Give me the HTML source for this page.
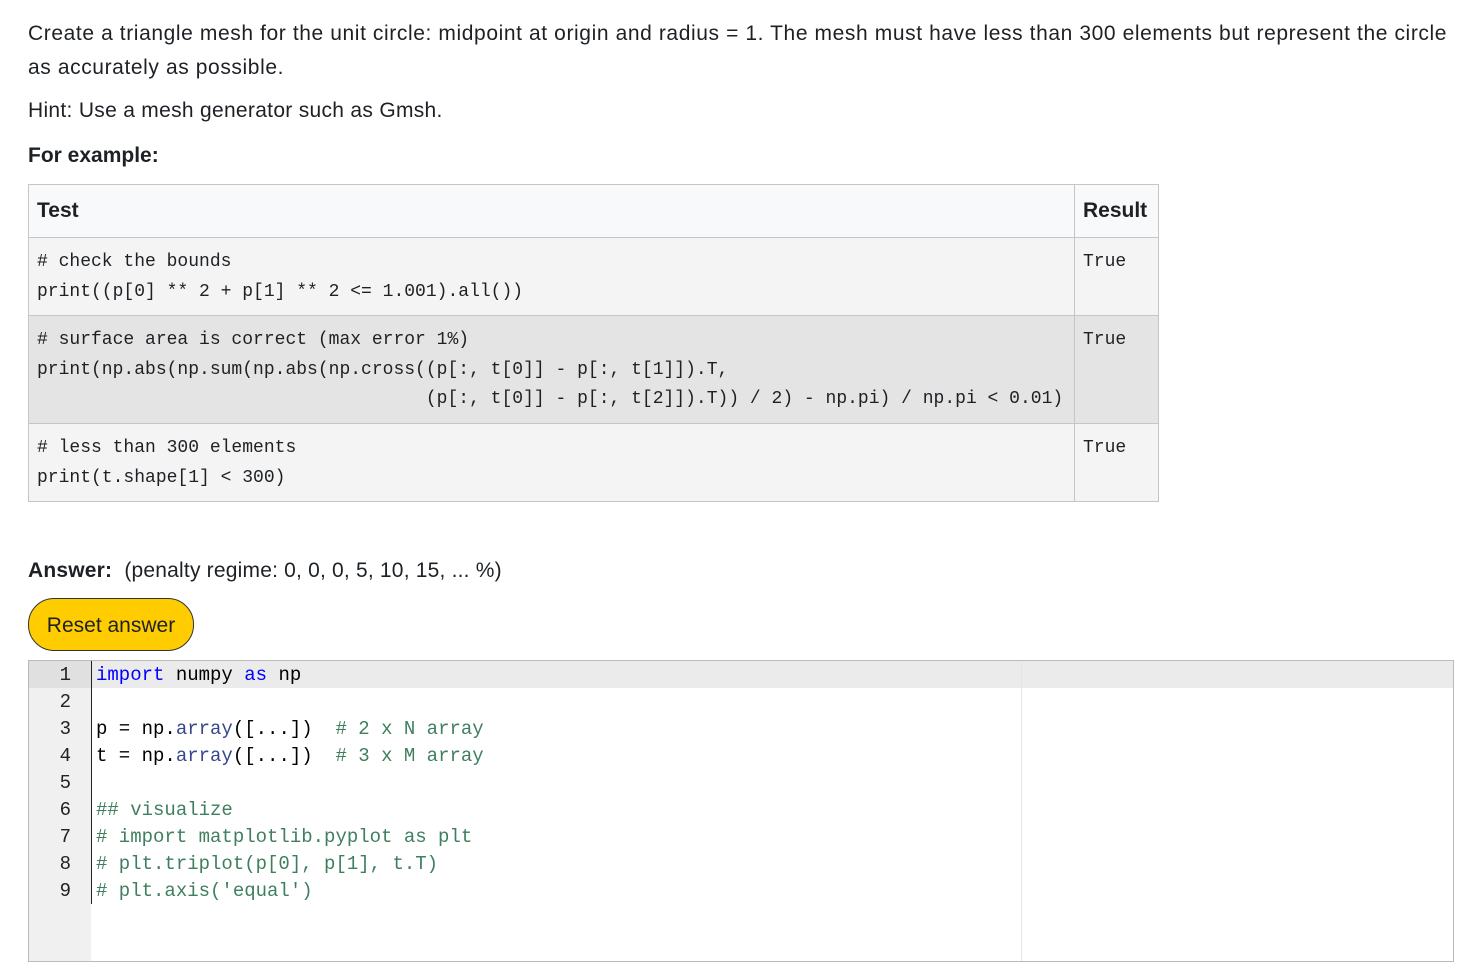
<!DOCTYPE html>
<html><head><meta charset="utf-8"><style>
body{margin:0;background:#fff;font-family:"Liberation Sans",sans-serif;color:#1d2125;width:1480px;height:952px;overflow:hidden;position:relative}
p.t{position:absolute;left:28px;margin:0;font-size:21px;white-space:nowrap}
table{position:absolute;left:28px;top:184px;border-collapse:collapse;width:1131px}
td,th{border:1px solid #c6c6c6;vertical-align:top;text-align:left;padding:0 8px}
th{height:52px;font-size:21px;font-weight:bold;background:#f8f9fa;vertical-align:middle}
td{font-family:"Liberation Mono",monospace;font-size:18px;line-height:29.5px;white-space:pre;padding-top:10px;padding-bottom:8px;color:#1d2125}
tr.r1 td,tr.r3 td{background:#f4f4f4}
tr.r2 td{background:#e4e4e4}
.btn{position:absolute;left:28px;top:598px;width:164px;height:51px;border:1px solid #333;border-radius:26px;background:#ffcc00;font-size:21px;line-height:53px;text-align:center;color:#1d2125}
.ed{position:absolute;left:28px;top:660px;width:1424px;height:300px;border:1px solid #bbb;background:#fff}
.gut{position:absolute;left:0;top:0;width:62px;height:300px;background:#f0f0f0}
.hl{position:absolute;left:0;top:0;width:1424px;height:27px;background:#ebebeb}
.ln{position:absolute;left:0;width:42px;text-align:right;font-family:"Liberation Mono",monospace;font-size:19px;color:#222}
.cd{position:absolute;left:67px;font-family:"Liberation Mono",monospace;font-size:19px;white-space:pre;color:#000}
.k{color:#0000ff}.c{color:#3f7f5f}.f{color:#36468c}
</style></head><body>
<p class="t" style="top:17px;line-height:34px;letter-spacing:0.6px">Create a triangle mesh for the unit circle: midpoint at origin and radius = 1. The mesh must have less than 300 elements but represent the circle<br>as accurately as possible.</p>
<p class="t" style="top:99px;letter-spacing:0.3px">Hint: Use a mesh generator such as Gmsh.</p>
<p class="t" style="top:144px;font-weight:bold">For example:</p>
<table>
<tr><th style="width:1029px">Test</th><th>Result</th></tr>
<tr class="r1" style="height:78px"><td># check the bounds
print((p[0] ** 2 + p[1] ** 2 &lt;= 1.001).all())</td><td>True</td></tr>
<tr class="r2" style="height:108px"><td># surface area is correct (max error 1%)
print(np.abs(np.sum(np.abs(np.cross((p[:, t[0]] - p[:, t[1]]).T,
                                    (p[:, t[0]] - p[:, t[2]]).T)) / 2) - np.pi) / np.pi &lt; 0.01)</td><td>True</td></tr>
<tr class="r3" style="height:78px"><td># less than 300 elements
print(t.shape[1] &lt; 300)</td><td>True</td></tr>
</table>
<p class="t" style="top:559px;letter-spacing:0.2px"><b>Answer:</b>&nbsp; (penalty regime: 0, 0, 0, 5, 10, 15, ... %)</p>
<div class="btn">Reset answer</div>
<div class="ed">
<div class="hl"></div>
<div class="gut"></div>
<div style="position:absolute;left:0;top:0;width:62px;height:27px;background:#e0e0e0"></div>
<div style="position:absolute;left:62px;top:0;width:1px;height:243px;background:#222"></div>
<div style="position:absolute;left:992px;top:0;width:1px;height:300px;background:#e4e4e4"></div>
<div class="ln" style="top:3px">1</div><div class="ln" style="top:30px">2</div><div class="ln" style="top:57px">3</div><div class="ln" style="top:84px">4</div><div class="ln" style="top:111px">5</div><div class="ln" style="top:138px">6</div><div class="ln" style="top:165px">7</div><div class="ln" style="top:192px">8</div><div class="ln" style="top:219px">9</div>
<div class="cd" style="top:3px"><span class="k">import</span> numpy <span class="k">as</span> np</div>
<div class="cd" style="top:57px">p = np.<span class="f">array</span>([...])  <span class="c"># 2 x N array</span></div>
<div class="cd" style="top:84px">t = np.<span class="f">array</span>([...])  <span class="c"># 3 x M array</span></div>
<div class="cd c" style="top:138px">## visualize</div>
<div class="cd c" style="top:165px"># import matplotlib.pyplot as plt</div>
<div class="cd c" style="top:192px"># plt.triplot(p[0], p[1], t.T)</div>
<div class="cd c" style="top:219px"># plt.axis('equal')</div>
</div>
</body></html>
